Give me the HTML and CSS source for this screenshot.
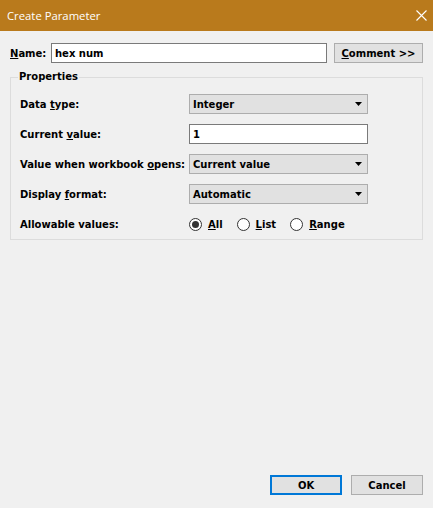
FILE: index.html
```html
<!DOCTYPE html>
<html>
<head>
<meta charset="utf-8">
<link rel="stylesheet" href="styles.css">
</head>
<body>
<div class="window">
  <div class="titlebar">
    <span class="title">Create Parameter</span>
    <svg class="close" width="11" height="11" viewBox="0 0 11 11"><path d="M0.5 0.5 L10.5 10.5 M10.5 0.5 L0.5 10.5" stroke="#fff" stroke-width="1.1" fill="none"/></svg>
  </div>
  <div class="content">
    <div class="name-row">
      <span class="name-label"><u>N</u>ame:</span>
      <div class="textbox name-input">hex num</div>
      <div class="button comment-btn"><u>C</u>omment &gt;&gt;</div>
    </div>
    <fieldset class="group">
      <legend class="legend">Properties</legend>
      <div class="rows">
        <div class="row">
          <span class="label">Data <u>t</u>ype:</span>
          <div class="combo"><span>Integer</span><svg class="arrow" width="7" height="4" viewBox="0 0 7 4"><polygon points="0,0 7,0 3.5,4" fill="#000"/></svg></div>
        </div>
        <div class="row">
          <span class="label">Current <u>v</u>alue:</span>
          <div class="textbox value-input">1</div>
        </div>
        <div class="row">
          <span class="label">Value when workbook <u>o</u>pens:</span>
          <div class="combo"><span>Current value</span><svg class="arrow" width="7" height="4" viewBox="0 0 7 4"><polygon points="0,0 7,0 3.5,4" fill="#000"/></svg></div>
        </div>
        <div class="row">
          <span class="label">Display <u>f</u>ormat:</span>
          <div class="combo"><span>Automatic</span><svg class="arrow" width="7" height="4" viewBox="0 0 7 4"><polygon points="0,0 7,0 3.5,4" fill="#000"/></svg></div>
        </div>
        <div class="row">
          <span class="label">Allowable values:</span>
          <div class="radios">
            <div class="radio">
              <svg class="radio-dot" width="13" height="13" viewBox="0 0 13 13"><circle cx="6.5" cy="6.5" r="6" fill="#fff" stroke="#333" stroke-width="1"/><circle cx="6.5" cy="6.5" r="3.5" fill="#333"/></svg>
              <span><u>A</u>ll</span>
            </div>
            <div class="radio">
              <svg class="radio-dot" width="13" height="13" viewBox="0 0 13 13"><circle cx="6.5" cy="6.5" r="6" fill="#fff" stroke="#333" stroke-width="1"/></svg>
              <span><u>L</u>ist</span>
            </div>
            <div class="radio">
              <svg class="radio-dot" width="13" height="13" viewBox="0 0 13 13"><circle cx="6.5" cy="6.5" r="6" fill="#fff" stroke="#333" stroke-width="1"/></svg>
              <span><u>R</u>ange</span>
            </div>
          </div>
        </div>
      </div>
    </fieldset>
    <div class="footer">
      <div class="button ok-btn">OK</div>
      <div class="button cancel-btn">Cancel</div>
    </div>
  </div>
</div>
</body>
</html>
```
FILE: styles.css
```css
html, body {
  margin: 0;
  padding: 0;
}
body {
  background: #f0f0f0;
  font-family: "DejaVu Sans", sans-serif;
  font-weight: bold;
  font-size: 10px;
  color: #000;
}
.window {
  height: 508px;
  display: flex;
  flex-direction: column;
}
.titlebar {
  height: 31px;
  flex: none;
  background: #b97a1c;
  display: flex;
  align-items: center;
  justify-content: space-between;
  padding: 0 6px 0 7px;
}
.title {
  font-family: "Open Sans", sans-serif;
  font-weight: 400;
  font-size: 11.3px;
  color: #fff;
}
.close {
  display: block;
}
.content {
  flex: 1;
  display: flex;
  flex-direction: column;
  padding: 12px 10px 13px 10px;
}
.name-row {
  display: flex;
  align-items: center;
  height: 20px;
}
.name-label {
  width: 41px;
}
.textbox {
  height: 20px;
  box-sizing: border-box;
  border: 1px solid #7a7a7a;
  background: #fff;
  padding-left: 3px;
  display: flex;
  align-items: center;
}
.name-input {
  width: 276px;
}
.button {
  height: 20px;
  box-sizing: border-box;
  border: 1px solid #adadad;
  background: #e1e1e1;
  display: flex;
  align-items: center;
  justify-content: center;
}
.comment-btn {
  margin-left: 7px;
  width: 89px;
}
.group {
  margin: 8px 0 0 0;
  padding: 0 0 5px 9px;
  border: 1px solid #dcdcdc;
  min-width: 0;
}
.legend {
  padding: 0 1px;
  margin-left: -2px;
  line-height: 12px;
}
.rows {
  padding-top: 11px;
  display: flex;
  flex-direction: column;
  gap: 10px;
}
.row {
  display: flex;
  align-items: center;
  height: 20px;
}
.label {
  width: 169px;
  flex: none;
}
.combo {
  width: 179px;
  height: 20px;
  box-sizing: border-box;
  border: 1px solid #adadad;
  background: #e1e1e1;
  padding: 0 5px 0 3px;
  display: flex;
  align-items: center;
  justify-content: space-between;
}
.arrow {
  display: block;
}
.value-input {
  width: 179px;
}
.radios {
  display: flex;
  align-items: center;
  gap: 14px;
}
.radio {
  display: flex;
  align-items: center;
  gap: 6px;
}
.radio-dot {
  display: block;
}
.footer {
  margin-top: auto;
  display: flex;
  justify-content: flex-end;
  gap: 9px;
}
.ok-btn {
  width: 72px;
  border: 2px solid #0078d7;
}
.cancel-btn {
  width: 72px;
}
```
